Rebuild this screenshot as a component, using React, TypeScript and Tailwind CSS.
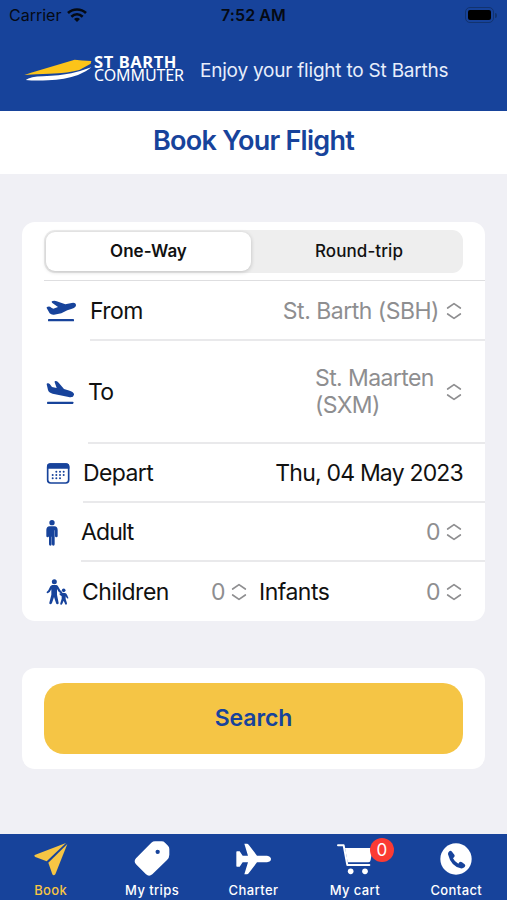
import type { ReactNode } from "react";
import clsx from "clsx";

function WifiIcon() {
  return (
    <svg viewBox="0 0 60 42" className="h-[14px] w-5" fill="none" stroke="#050a14" strokeWidth="8">
      <path d="M3 15C18 1 42 1 57 15" />
      <path d="M13 26c10-9 24-9 34 0" />
      <path d="M21 33c6-5 12-5 18 0l-9 9z" fill="#050a14" stroke="none" />
    </svg>
  );
}

function BrandMark() {
  return (
    <svg viewBox="0 0 210 75" className="h-[25px] w-[70px]">
      <path d="M4 51L24 44 155 5q20 2 50 4l-2 8-34 19q-30 9-90 11-40 1-75 4Z" fill="#fcc419" />
      <path d="M8 66Q22 56 60 55 110 53 145 46q30-7 60-18-14 12-40 23-40 14-90 16-40 2-67-1Z" fill="#fff" />
    </svg>
  );
}

function TakeoffIcon() {
  return (
    <svg viewBox="0 0 93 72" className="h-6 w-[31px]" fill="#17439b">
      <path d="M2 27q-1-4 4-4 6-1 10 3l6 3 14-5L18 11q-3-4 2-5 7-2 12 1l26 9 19-4q12-2 13 5 1 8-12 12L64 34 46 43l-22 4q-8 1-13-4Z" />
      <rect x="6" y="60" width="78" height="7" rx="2" />
    </svg>
  );
}

function LandingIcon() {
  return (
    <svg viewBox="0 0 84 75" className="h-[25px] w-7" fill="#17439b">
      <path d="M2 13q0-4 5-3 5 1 7 6l4 5 14 3-6-17q-1-5 4-4 4 0 8 5l16 19 17 5q14 5 13 12-2 10-16 7L20 41Q8 38 6 30Z" />
      <rect x="3" y="65" width="79" height="7" rx="2" />
    </svg>
  );
}

const CALENDAR_DOTS = [
  [30, 29], [41, 29], [52, 29],
  [19, 39], [30, 39], [41, 39], [52, 39],
  [19, 49], [30, 49], [41, 49],
];

function CalendarIcon() {
  return (
    <svg viewBox="0 0 72 69" className="h-[23px] w-6" fill="#17439b">
      <rect x="5" y="6" width="63" height="57" rx="9" fill="none" stroke="#17439b" strokeWidth="5" />
      <path d="M3 20v-6q0-10 10-10h47q10 0 10 10v6Z" />
      {CALENDAR_DOTS.map(([x, y]) => (
        <circle key={`${x}-${y}`} cx={x + 1} cy={y} r="3" />
      ))}
    </svg>
  );
}

function AdultIcon() {
  return (
    <svg viewBox="0 0 36 78" className="h-[26px] w-3" fill="#17439b">
      <circle cx="18" cy="8" r="8" />
      <path d="M11 19h14q10 1 10 11v18q0 4-4 4t-4-4V31h-1v42q0 4-4 4t-4-4V50h-1v23q0 4-4 4t-4-4V31H9v17q0 4-4 4t-4-4V30q0-10 10-11Z" />
    </svg>
  );
}

function ChildrenIcon() {
  return (
    <svg viewBox="0 0 69 78" className="h-[26px] w-[23px]" fill="#17439b">
      <circle cx="25" cy="8" r="7.5" />
      <path d="M19 18h12q4 1 6 5l6 11 6 6q1 4-3 4l-8-6-5-8v17l5 25q0 4-4 4-3 0-4-4l-6-18-6 18q-2 4-5 4-4-1-3-5l6-24V31l-5 8-6 4q-4 0-3-4l5-5 6-12q2-3 6-4Z" />
      <circle cx="53" cy="34" r="5.5" />
      <path d="M49 42h8q4 1 6 5l4 9q0 4-4 2l-4-6v8l4 13q0 4-3 4-2 0-3-3l-4-9-4 9q-1 4-5 3-2-1-1-4l4-14v-7l-6-5q-2-4 2-4Z" />
    </svg>
  );
}

function Chevrons() {
  return (
    <svg viewBox="0 0 48 54" className="h-[18px] w-4 shrink-0" fill="none" stroke="#8e8e90" strokeWidth="5" strokeLinecap="round" strokeLinejoin="round">
      <path d="M5 18L24 5l19 13M5 36l19 13 19-13" />
    </svg>
  );
}

function PaperPlaneIcon() {
  return (
    <svg viewBox="0 0 102 102" className="size-[34px]" fill="#f6c544">
      <path d="M96 3L4 38q-6 3 0 7l34 13Z" />
      <path d="M100 6L43 62l12 35q4 6 9 0Z" />
    </svg>
  );
}

function TagIcon() {
  return (
    <svg viewBox="0 0 108 108" className="size-9" fill="#fff">
      <path
        fillRule="evenodd"
        d="M52 5q5-4 11-4h20q6 0 10 4l9 9q4 4 4 10v17q0 9-7 16l-44 43q-10 8-19 0L6 70Q-2 61 6 52Zm19 21a6 6 0 1 0 0 13 6 6 0 1 0 0-13Z"
      />
    </svg>
  );
}

function AirplaneIcon() {
  return (
    <svg viewBox="0 0 105 96" className="h-8 w-[35px]" fill="#fff">
      <path d="M25 2h8q3 0 5 3l25 33h30q12 2 12 10t-12 10H63L38 91q-2 3-5 3h-8l11-36H20L11 71H3q-2 0-2-3V28q0-3 2-3h8l9 13h16Z" />
    </svg>
  );
}

function CartIcon() {
  return (
    <svg viewBox="0 0 108 96" className="h-8 w-9" fill="#fff">
      <path d="M3 7h17l11 59h66" fill="none" stroke="#fff" strokeWidth="6" strokeLinecap="round" strokeLinejoin="round" />
      <path d="M24 15h77q6 0 5 6l-5 30q-1 7-7 7H32Z" />
      <circle cx="41" cy="85" r="8.5" />
      <circle cx="84" cy="85" r="8.5" />
    </svg>
  );
}

function PhoneIcon() {
  return (
    <svg viewBox="0 0 96 96" className="size-8">
      <circle cx="48" cy="48" r="47" fill="#fff" />
      <path
        d="M24 34q-1-5 4-9 4-4 8 1l7 9q3 4-1 8l-3 3q5 11 16 16l3-4q4-3 8 0l8 6q4 4 0 8-5 5-12 4-29-6-38-42Z"
        fill="#17439b"
      />
    </svg>
  );
}

type RowProps = {
  icon: ReactNode;
  children: ReactNode;
  gap: string;
  height?: string;
  last?: boolean;
};

function Row({ icon, children, gap, height = "h-[59px]", last }: RowProps) {
  return (
    <div className={clsx("flex pl-6", height)}>
      <div className={clsx("flex shrink-0 items-center", gap)}>{icon}</div>
      <div className={clsx("flex min-w-0 flex-1 items-center pt-px pr-[23px]", !last && "border-b-2 border-[#e9e9eb]")}>
        {children}
      </div>
    </div>
  );
}

function Stepper({ value }: { value: number }) {
  return (
    <span className="flex items-center gap-[6px] text-[#8e8e90]">
      {value}
      <Chevrons />
    </span>
  );
}

const tabs = [
  { label: "Book", icon: <PaperPlaneIcon />, active: true },
  { label: "My trips", icon: <TagIcon /> },
  { label: "Charter", icon: <AirplaneIcon /> },
  { label: "My cart", icon: <CartIcon />, badge: 0 },
  { label: "Contact", icon: <PhoneIcon /> },
];

export default function App() {
  return (
    <div className="flex h-[900px] w-[507px] flex-col overflow-hidden bg-[#f0f0f5] font-['Inter',sans-serif] text-[#111]">
      <header className="h-[111px] bg-[#17439b]">
        <div className="grid h-[30px] grid-cols-3 items-center px-[9px] text-[16px] text-[#050a14]">
          <div className="flex items-center gap-[6px]">
            Carrier
            <WifiIcon />
          </div>
          <div className="text-center font-semibold tracking-[0.1px]">7:52 AM</div>
          <div className="flex items-center justify-end gap-px pr-px">
            <div className="h-4 w-[29px] rounded-[5px] border border-[#12336f] p-[2px]">
              <div className="h-full rounded-[2px] bg-black" />
            </div>
            <div className="h-[5px] w-[2px] rounded-r bg-[#12336f]" />
          </div>
        </div>
        <div className="flex h-20 items-center pl-[23px]">
          <BrandMark />
          <div className="mt-[-3px] ml-px w-[106px] font-['Noto_Sans',sans-serif] text-white">
            <div className="text-[16.5px] leading-[14px] font-bold tracking-[0.6px]">ST BARTH</div>
            <div className="text-[16px] leading-[13px] tracking-[-0.1px]">COMMUTER</div>
          </div>
          <div className="pt-[2px] text-[19px] tracking-[-0.22px] whitespace-nowrap text-[#e8eefb]">
            Enjoy your flight to St Barths
          </div>
        </div>
      </header>

      <h1 className="h-[63px] bg-white pt-[11px] text-center text-[27px] leading-[38px] font-semibold tracking-[-0.75px] text-[#17439b]">
        Book Your Flight
      </h1>

      <main className="flex-1 px-[22px] pt-12">
        <section className="h-[399px] overflow-hidden rounded-[13px] bg-white text-[23px] tracking-[-0.5px]">
          <div className="ml-[22px] h-[59px] border-b border-[#dedee0] pt-2 pr-[22px]">
            <div className="flex h-[43px] rounded-[11px] bg-[#eee] p-[2px] text-[17px] tracking-normal">
              <button className="w-[205px] rounded-[9px] bg-white pt-px font-semibold shadow-[0_1px_4px_rgba(0,0,0,0.2)]">
                One-Way
              </button>
              <button className="flex-1 pt-px pl-[6px] font-medium tracking-[0.1px]">Round-trip</button>
            </div>
          </div>
          <Row icon={<TakeoffIcon />} gap="w-11" height="h-[60px]">
            <span className="flex-1 pt-px tracking-[-0.6px]">From</span>
            <span className="mr-[7px] pt-px text-[#8e8e90]">St. Barth (SBH)</span>
            <Chevrons />
          </Row>
          <Row icon={<LandingIcon />} gap="w-[42px]" height="h-[103px]">
            <span className="flex-1 tracking-[-0.9px]">To</span>
            <span className="mr-[7px] w-[124px] leading-[27px] tracking-[-0.6px] text-[#8e8e90]">
              St. Maarten (SXM)
            </span>
            <Chevrons />
          </Row>
          <Row icon={<CalendarIcon />} gap="w-[37px]">
            <span className="flex-1 tracking-[-0.6px]">Depart</span>
            <span className="mr-[-1px] tracking-[-0.8px]">Thu, 04 May 2023</span>
          </Row>
          <Row icon={<AdultIcon />} gap="w-[35px]">
            <span className="flex-1 tracking-[-0.9px]">Adult</span>
            <Stepper value={0} />
          </Row>
          <Row icon={<ChildrenIcon />} gap="w-[36px]" last>
            <span className="w-[129px]">Children</span>
            <Stepper value={0} />
            <span className="ml-3 flex-1">Infants</span>
            <Stepper value={0} />
          </Row>
        </section>

        <section className="mt-[47px] h-[101px] rounded-[13px] bg-white px-[22px] pt-[15px]">
          <button className="h-[71px] w-full rounded-[20px] bg-[#f5c545] text-[23px] font-semibold tracking-[-0.1px] text-[#17439b]">
            Search
          </button>
        </section>
      </main>

      <nav className="grid h-[66px] grid-cols-5 bg-[#17439b] pt-[7px]">
        {tabs.map((tab) => (
          <div
            key={tab.label}
            className={clsx("flex flex-col items-center text-[13px] font-medium tracking-[0.4px]", tab.active ? "text-[#f6c544]" : "text-white")}
          >
            <div className="relative flex h-9 items-center">
              {tab.icon}
              {tab.badge !== undefined && (
                <span className="absolute -top-[3px] left-[33px] flex size-6 items-center justify-center rounded-full bg-[#fb3b33] pt-px text-[17px] font-normal tracking-normal text-white">
                  {tab.badge}
                </span>
              )}
            </div>
            <span className="mt-[3px] leading-5">{tab.label}</span>
          </div>
        ))}
      </nav>
    </div>
  );
}
